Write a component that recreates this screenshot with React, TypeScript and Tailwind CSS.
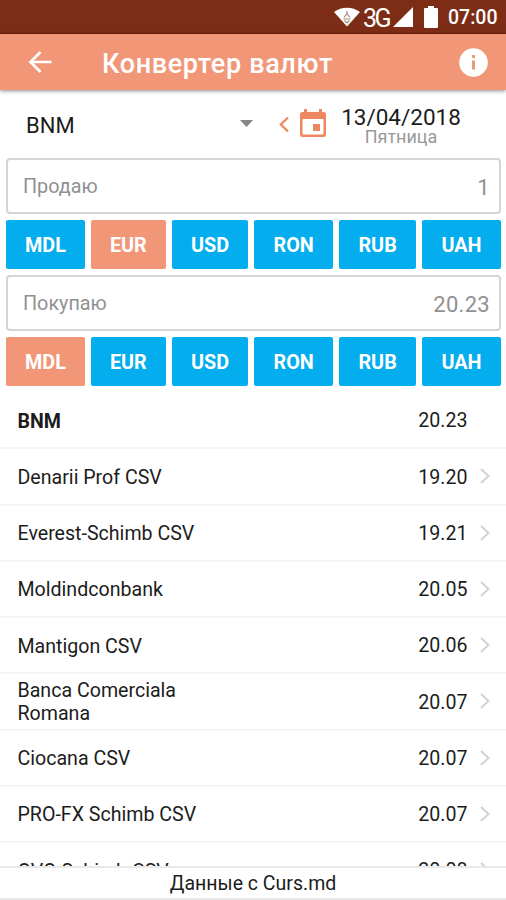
import clsx from "clsx";
import { useState } from "react";

type Rate = {
  name: string;
  value: string;
};

const currencies = ["MDL", "EUR", "USD", "RON", "RUB", "UAH"];

const rates: Rate[] = [
  { name: "BNM", value: "20.23" },
  { name: "Denarii Prof CSV", value: "19.20" },
  { name: "Everest-Schimb CSV", value: "19.21" },
  { name: "Moldindconbank", value: "20.05" },
  { name: "Mantigon CSV", value: "20.06" },
  { name: "Banca Comerciala Romana", value: "20.07" },
  { name: "Ciocana CSV", value: "20.07" },
  { name: "PRO-FX Schimb CSV", value: "20.07" },
  { name: "OVO Schimb CSV", value: "20.08" },
];

function StatusBar() {
  return (
    <div className="flex h-[34px] shrink-0 items-center border-b border-[#6f1e0c] bg-[#7d2d15] text-white">
      <svg
        aria-hidden="true"
        className="ml-[334px] h-5 w-[26px] shrink-0"
        viewBox="0 0 26 20"
      >
        <path d="M0 5C7.500-.8 18.500-.8 26 5L13 19.500Z" fill="#fff" />
        <path
          d="M13 4v3M10 10.500 13 6.500l3 4M9.500 12h7M10.500 13.500l2.500 2.500 2.500-2.500"
          fill="none"
          stroke="#a98a80"
          strokeWidth="1.200"
        />
      </svg>
      <span className="mt-[3px] ml-[3px] w-[27px] shrink-0 text-[25px] leading-none tracking-[-2.5px]">
        3G
      </span>
      <svg
        aria-hidden="true"
        className="ml-[3px] h-5 w-5 shrink-0"
        viewBox="0 0 20 20"
      >
        <path d="M20 0v20H0Z" fill="#fff" />
      </svg>
      <svg
        aria-hidden="true"
        className="ml-[11px] h-[22px] w-[14px] shrink-0"
        viewBox="0 0 14 22"
      >
        <path
          d="M4 0h6v2h3a1 1 0 0 1 1 1v18a1 1 0 0 1-1 1H1a1 1 0 0 1-1-1V3a1 1 0 0 1 1-1h3Z"
          fill="#fff"
        />
      </svg>
      <span className="mt-[3px] ml-[10px] text-[19.500px] leading-none font-medium">
        07:00
      </span>
    </div>
  );
}

function Header() {
  return (
    <header className="z-10 flex h-[56px] shrink-0 items-center bg-[#f19778] pr-[18px] pl-[28px] text-white shadow-[0_1px_4px_rgba(0,0,0,0.45)]">
      <button type="button" aria-label="Назад">
        <svg className="h-6 w-6" viewBox="0 0 24 24">
          <path
            d="M23.500 12H2.500M12.500 2 2.500 12l10 10"
            fill="none"
            stroke="#fff"
            strokeWidth="2.600"
          />
        </svg>
      </button>
      <h1 className="mt-[4px] ml-[50px] flex-1 text-[27px] leading-none font-medium tracking-[0.65px]">
        Конвертер валют
      </h1>
      <button type="button" aria-label="Информация">
        <svg className="h-[29px] w-[29px]" viewBox="0 0 29 29">
          <circle cx="14.500" cy="14.500" r="14.300" fill="#fff" />
          <path d="M13 7h3v3h-3ZM13 12.500h3v9h-3Z" fill="#f19778" />
        </svg>
      </button>
    </header>
  );
}

function Toolbar() {
  return (
    <div className="flex h-[68px] shrink-0 items-center">
      <button
        type="button"
        className="flex w-[253px] items-center justify-between pl-[26px] text-[22px] leading-none"
      >
        <span className="mt-[3px]">BNM</span>
        <svg
          aria-hidden="true"
          className="mt-[-2px] h-[7px] w-[13px]"
          viewBox="0 0 13 7"
        >
          <path d="M0 0h13L6.500 7Z" fill="#858585" />
        </svg>
      </button>
      <button type="button" aria-label="Предыдущий день" className="ml-[26px]">
        <svg className="h-[17px] w-[10px]" viewBox="0 0 10 16">
          <path
            d="M9 1 1.800 8 9 15"
            fill="none"
            stroke="#ed875f"
            strokeWidth="2.200"
          />
        </svg>
      </button>
      <button
        type="button"
        aria-label="Дата"
        className="mb-[2px] ml-[11px]"
      >
        <svg className="h-7 w-[26px]" viewBox="0 0 26 28">
          <path
            fillRule="evenodd"
            d="M4 0h3v3h12V0h3v3h1.500A2.500 2.500 0 0 1 26 5.500v20a2.500 2.500 0 0 1-2.500 2.500h-21A2.500 2.500 0 0 1 0 25.500v-20A2.500 2.500 0 0 1 2.500 3H4ZM2.500 10v14.500a1 1 0 0 0 1 1h19a1 1 0 0 0 1-1V10Z"
            fill="#ed875f"
          />
          <path d="M13 15h7v7h-7Z" fill="#ed875f" />
        </svg>
      </button>
      <div className="mt-[3px] ml-[11px] flex w-[128px] flex-col items-center">
        <span className="text-[22.500px] leading-[22px]">13/04/2018</span>
        <span className="text-[18px] leading-[18px] text-[#999]">Пятница</span>
      </div>
    </div>
  );
}

type AmountProps = {
  label: string;
  value: string;
};

function Amount({ label, value }: AmountProps) {
  return (
    <div className="mr-[5px] ml-[6px] flex h-[56px] shrink-0 items-center justify-between rounded-[4px] border-2 border-[#d5d5d5] pt-[2px] pr-[9px] pl-[15px] text-[#919191]">
      <span className="text-[19.800px]">{label}</span>
      <span className="text-[22px] tracking-[0.3px]">{value}</span>
    </div>
  );
}

type CurrencyTabsProps = {
  selected: string;
  onSelect: (currency: string) => void;
};

function CurrencyTabs({ selected, onSelect }: CurrencyTabsProps) {
  return (
    <div className="mr-[5px] ml-[6px] grid h-[49px] shrink-0 grid-cols-[79fr_75fr_76.5fr_79fr_77fr_79fr] gap-[6px]">
      {currencies.map((currency) => (
        <button
          key={currency}
          type="button"
          onClick={() => onSelect(currency)}
          className={clsx(
            "rounded-[2px] pt-[2px] text-[19.800px] font-bold text-white",
            currency === selected ? "bg-[#f19778]" : "bg-[#03adee]"
          )}
        >
          {currency}
        </button>
      ))}
    </div>
  );
}

function RateRow({ rate, current }: { rate: Rate; current: boolean }) {
  return (
    <li className="flex h-[56.25px] items-center border-b-2 border-[#f5f5f5] pl-[17.500px] text-[19.600px]">
      <span
        className={clsx(
          "mt-[2px] w-[190px] leading-[23px]",
          current && "font-bold"
        )}
      >
        {rate.name}
      </span>
      <span className="mt-[2px] ml-auto w-[50px] text-right">
        {rate.value}
      </span>
      <span className="ml-[12.500px] w-[26px]">
        {!current && (
          <svg
            aria-hidden="true"
            className="h-4 w-[10px]"
            viewBox="0 0 10 16"
          >
            <path
              d="M1 1 8.500 8 1 15"
              fill="none"
              stroke="#d2d2d2"
              strokeWidth="2"
            />
          </svg>
        )}
      </span>
    </li>
  );
}

export default function App() {
  const [sell, setSell] = useState("EUR");
  const [buy, setBuy] = useState("MDL");

  return (
    <div className="flex h-[900px] w-[506px] flex-col overflow-hidden bg-white font-[Roboto,sans-serif] text-[#1c1c1c]">
      <StatusBar />
      <Header />
      <Toolbar />
      <Amount label="Продаю" value="1" />
      <div className="h-[6px] shrink-0" />
      <CurrencyTabs selected={sell} onSelect={setSell} />
      <div className="h-[6px] shrink-0" />
      <Amount label="Покупаю" value="20.23" />
      <div className="h-[6px] shrink-0" />
      <CurrencyTabs selected={buy} onSelect={setBuy} />
      <ul className="mt-[7px] min-h-0 flex-1 overflow-hidden">
        {rates.map((rate, index) => (
          <RateRow key={rate.name} rate={rate} current={index === 0} />
        ))}
      </ul>
      <footer className="flex h-[34px] shrink-0 items-center justify-center border-y-2 border-[#e9e9e9] pt-[2px] text-[19.500px]">
        Данные с Curs.md
      </footer>
    </div>
  );
}
